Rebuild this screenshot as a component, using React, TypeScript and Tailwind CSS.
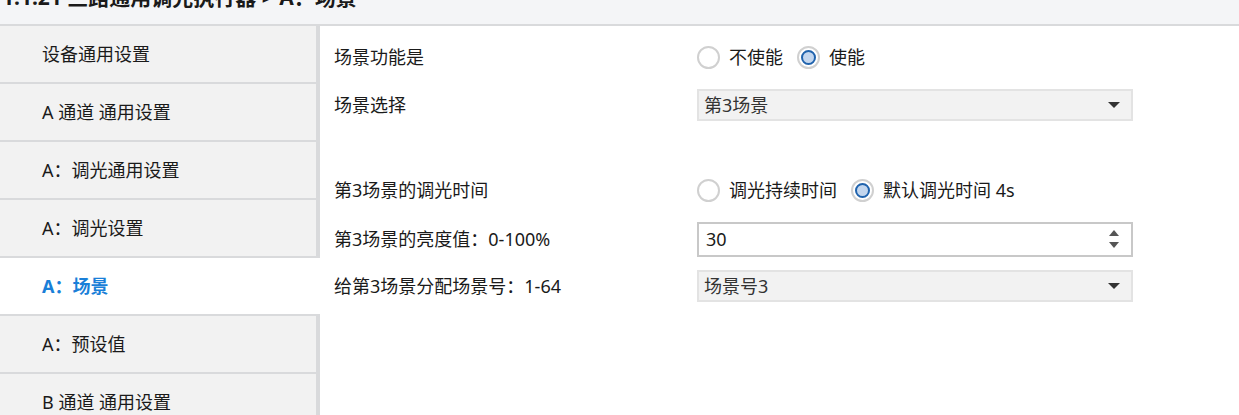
import React from 'react';

const menu = [
  '设备通用设置',
  'A 通道 通用设置',
  'A：调光通用设置',
  'A：调光设置',
  'A：场景',
  'A：预设值',
  'B 通道 通用设置',
];

const Radio: React.FC<{ checked?: boolean; label: string }> = ({ checked, label }) => (
  <label className="flex items-center gap-[9px] mr-[14px]">
    <span className="w-[23px] h-[23px] rounded-full border-2 border-[#d0d0d0] bg-white flex items-center justify-center">
      {checked && <span className="w-[15px] h-[15px] rounded-full border-2 border-[#2063ad] bg-[#c3d6ee]" />}
    </span>
    <span>{label}</span>
  </label>
);

const Caret = () => (
  <svg width="14" height="8" viewBox="0 0 14 8">
    <path d="M1 1 L13 1 L7 7 Z" fill="#333" />
  </svg>
);

const Select: React.FC<{ value: string }> = ({ value }) => (
  <div className="w-[436px] h-[32px] bg-[#f2f2f2] border-2 border-[#e3e3e3] flex items-center justify-between pl-[5px] pr-[10px] text-[#333]">
    <span>{value}</span>
    <Caret />
  </div>
);

export default function App() {
  return (
    <div
      className="w-[1239px] h-[415px] overflow-hidden bg-white text-[18px] text-[#1a1a1a]"
      style={{ fontFamily: '"Noto Sans", "Noto Sans CJK SC", sans-serif' }}
    >
      <div className="h-[26px] bg-[#f4f5f7] border-b-2 border-[#d9dadc] overflow-hidden">
        <div className="-mt-[15px] pl-[2px] text-[21px] font-bold leading-[24px] whitespace-nowrap">
          1.1.21 三路通用调光执行器 &gt; A：场景
        </div>
      </div>
      <div className="flex">
        <div className="w-[320px] shrink-0 bg-[#d9dadc]">
          {menu.map((m) => {
            const active = m === 'A：场景';
            return (
              <div
                key={m}
                className={
                  active
                    ? 'h-[56px] mb-[2px] w-[320px] bg-white flex items-center pl-[42px] font-bold text-[#1a7fd8]'
                    : 'h-[56px] mb-[2px] w-[316px] bg-[#f2f2f2] flex items-center pl-[42px]'
                }
              >
                {m}
              </div>
            );
          })}
        </div>
        <div className="flex-1 pl-[14px] pt-[7px]">
          <div className="flex items-center h-[48px]">
            <div className="w-[363px]">场景功能是</div>
            <Radio label="不使能" />
            <Radio label="使能" checked />
          </div>
          <div className="flex items-center h-[48px]">
            <div className="w-[363px]">场景选择</div>
            <Select value="第3场景" />
          </div>
          <div className="h-[37px]" />
          <div className="flex items-center h-[48px]">
            <div className="w-[363px]">第3场景的调光时间</div>
            <Radio label="调光持续时间" />
            <Radio label="默认调光时间 4s" checked />
          </div>
          <div className="flex items-center h-[50px]">
            <div className="w-[363px]">第3场景的亮度值：0-100%</div>
            <div className="w-[436px] h-[35px] bg-white border-2 border-[#c8c8c8] flex items-center justify-between pl-[7px] pr-[12px]">
              <span>30</span>
              <span className="flex flex-col gap-[6px]">
                <svg width="10" height="6" viewBox="0 0 10 6"><path d="M5 0 L10 6 L0 6 Z" fill="#555" /></svg>
                <svg width="10" height="6" viewBox="0 0 10 6"><path d="M0 0 L10 0 L5 6 Z" fill="#555" /></svg>
              </span>
            </div>
          </div>
          <div className="flex items-center h-[44px]">
            <div className="w-[363px]">给第3场景分配场景号：1-64</div>
            <Select value="场景号3" />
          </div>
        </div>
      </div>
    </div>
  );
}
